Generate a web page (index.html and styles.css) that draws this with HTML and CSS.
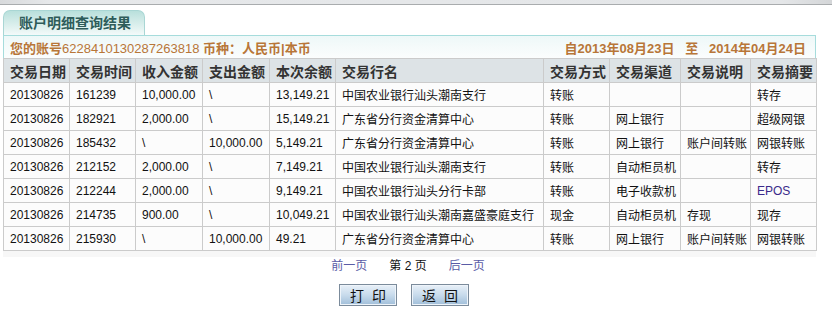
FILE: index.html
```html
<!DOCTYPE html>
<html lang="zh-CN">
<head>
<meta charset="utf-8">
<title>账户明细查询结果</title>
<link rel="stylesheet" href="styles.css">
</head>
<body>
<div class="topbar"></div>
<div class="wrap">
  <div class="tab">账户明细查询结果</div>
  <div class="info">
    <div class="info-left"><b>您的账号</b><span class="acct">6228410130287263818</span> <b>币种：人民币|本币</b></div>
    <div class="info-right"><b>自<span class="num">2013</span>年<span class="num">08</span>月<span class="num">23</span>日&nbsp;&nbsp;&nbsp;至&nbsp;&nbsp;&nbsp;<span class="num">2014</span>年<span class="num">04</span>月<span class="num">24</span>日</b></div>
  </div>
  <div class="tablebox">
    <table class="grid">
      <colgroup>
        <col class="c66"><col class="c66"><col class="c67"><col class="c67"><col class="c66">
        <col class="c208"><col class="c66"><col class="c71"><col class="c70"><col class="c66">
      </colgroup>
      <thead>
        <tr><th>交易日期</th><th>交易时间</th><th>收入金额</th><th>支出金额</th><th>本次余额</th><th>交易行名</th><th>交易方式</th><th>交易渠道</th><th>交易说明</th><th>交易摘要</th></tr>
      </thead>
      <tbody>
        <tr><td>20130826</td><td>161239</td><td>10,000.00</td><td>\</td><td>13,149.21</td><td>中国农业银行汕头潮南支行</td><td>转账</td><td></td><td></td><td>转存</td></tr>
        <tr><td>20130826</td><td>182921</td><td>2,000.00</td><td>\</td><td>15,149.21</td><td>广东省分行资金清算中心</td><td>转账</td><td>网上银行</td><td></td><td>超级网银</td></tr>
        <tr><td>20130826</td><td>185432</td><td>\</td><td>10,000.00</td><td>5,149.21</td><td>广东省分行资金清算中心</td><td>转账</td><td>网上银行</td><td>账户间转账</td><td>网银转账</td></tr>
        <tr><td>20130826</td><td>212152</td><td>2,000.00</td><td>\</td><td>7,149.21</td><td>中国农业银行汕头潮南支行</td><td>转账</td><td>自动柜员机</td><td></td><td>转存</td></tr>
        <tr><td>20130826</td><td>212244</td><td>2,000.00</td><td>\</td><td>9,149.21</td><td>中国农业银行汕头分行卡部</td><td>转账</td><td>电子收款机</td><td></td><td class="epos">EPOS</td></tr>
        <tr><td>20130826</td><td>214735</td><td>900.00</td><td>\</td><td>10,049.21</td><td>中国农业银行汕头潮南嘉盛豪庭支行</td><td>现金</td><td>自动柜员机</td><td>存现</td><td>现存</td></tr>
        <tr><td>20130826</td><td>215930</td><td>\</td><td>10,000.00</td><td>49.21</td><td>广东省分行资金清算中心</td><td>转账</td><td>网上银行</td><td>账户间转账</td><td>网银转账</td></tr>
      </tbody>
    </table>
  </div>
  <div class="pager">
    <a class="plink" href="#">前一页</a>
    <span class="pcur">第 2 页</span>
    <a class="plink" href="#">后一页</a>
  </div>
  <div class="actions">
    <button class="btn" type="button">打 印</button>
    <button class="btn" type="button">返 回</button>
  </div>
</div>
</body>
</html>
```

FILE: styles.css
```css
html, body {
  margin: 0;
  padding: 0;
  background: #ffffff;
}
body {
  font-family: "Liberation Sans", "Noto Sans CJK SC", sans-serif;
  font-size: 12px;
  color: #111;
}
.topbar {
  height: 4px;
  margin-right: 3px;
  background: linear-gradient(to right, #d8dadc, #e6e8ea 6%, #e4e6e8 94%, #d4d6d8);
  border-bottom: 1px solid #a9acae;
}
.wrap {
  margin: 5px 0 0 3px;
  width: 813px;
}
.tab {
  box-sizing: border-box;
  width: 142px;
  height: 25px;
  padding-left: 15px;
  line-height: 24px;
  font-size: 14px;
  font-weight: bold;
  color: #2e5c5a;
  background: linear-gradient(to bottom, #b9e0dc, #e2f2f0 70%, #f4fafa);
  border: 1px solid #a9d6d4;
  border-bottom: none;
  border-radius: 7px 7px 0 0;
}
.info {
  box-sizing: border-box;
  height: 23px;
  display: flex;
  align-items: center;
  justify-content: space-between;
  padding: 0 9px 0 6px;
  border: 1px solid #a6dcdc;
  border-bottom: none;
  background: linear-gradient(to bottom, #eef8f8, #fbfdfd);
  font-size: 13px;
  color: #b87638;
}
.info b {
  font-weight: bold;
}
.acct {
  font-weight: normal;
}
.tablebox {
  background: #f7f7f7;
  padding-bottom: 6px;
}
.grid {
  width: 813px;
  table-layout: fixed;
  border-collapse: collapse;
}
.c66 { width: 66px; }
.c67 { width: 67px; }
.c70 { width: 70px; }
.c71 { width: 71px; }
.c208 { width: 208px; }
.grid th, .grid td {
  border: 1px solid #cbcbcb;
  height: 23px;
  padding: 0 0 0 6px;
  text-align: left;
  white-space: nowrap;
  overflow: hidden;
}
.grid th {
  background: #dde3e6;
  font-size: 14px;
  font-weight: bold;
  color: #333;
}
.grid td {
  background: #fcfcfc;
  color: #111;
}
.grid td.epos {
  color: #3a2a8a;
}
.pager {
  height: 18px;
  line-height: 18px;
  display: flex;
  justify-content: center;
  gap: 22px;
  padding-right: 3px;
}
.plink {
  color: #5a5ca6;
  text-decoration: none;
}
.pcur {
  color: #111;
}
.actions {
  display: flex;
  justify-content: center;
  gap: 14px;
  margin-top: 9px;
  padding-right: 11px;
}
.btn {
  box-sizing: border-box;
  width: 58px;
  height: 22px;
  padding: 0;
  font-family: "Liberation Sans", "Noto Sans CJK SC", sans-serif;
  font-size: 14px;
  color: #111;
  letter-spacing: 2px;
  text-indent: 2px;
  border: 1px solid #7b8b9b;
  box-shadow: inset 0 0 0 1px #eef4fa;
  background: linear-gradient(to bottom, #e8f0f8, #c8dbec 50%, #a0bed9);
}
```
